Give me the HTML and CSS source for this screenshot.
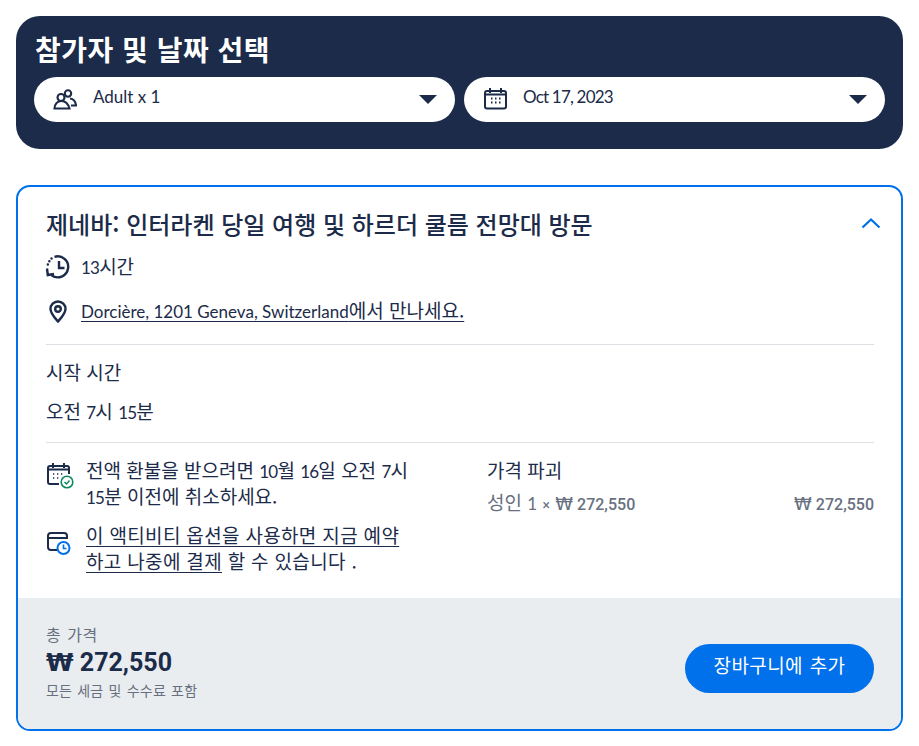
FILE: index.html
```html
<!DOCTYPE html>
<html lang="ko">
<head>
    <meta charset="UTF-8">
    <meta name="viewport" content="width=device-width, initial-scale=1.0">
    <title>참가자 및 날짜 선택</title>
    <link rel="stylesheet" href="styles.css">
</head>
<body>
    <div class="picker">
        <h2>참가자 및 날짜 선택</h2>
        <div class="picker-row">
            <div class="pill">
                <svg class="pill-icon" width="24" height="24" viewBox="0 0 24 24" fill="none" stroke="#1b2b49" stroke-width="2.100">
                    <circle cx="15" cy="5.500" r="3.200"/>
                    <path d="M17 10.500c3 .3 5.500 2.500 6 7h-5"/>
                    <circle cx="8" cy="9.500" r="3.500" fill="#fff"/>
                    <path d="M1.500 20.500c.3-4.500 3-7.500 7-7.500s6.700 3 8 7.500z" fill="#fff"/>
                </svg>
                <span class="num pill-text">Adult x 1</span>
                <span class="caret"></span>
            </div>
            <div class="pill">
                <svg class="pill-icon" width="24" height="24" viewBox="0 0 24 24" fill="none" stroke="#1b2b49" stroke-width="2">
                    <rect x="2" y="3" width="21" height="17.500" rx="2"/>
                    <path d="M7 0v5M18 0v5M2 6.500h21" />
                    <path d="M8 10.500h1.500M12 10.500h1.500M16 10.500h1.500M8 14.500h1.500M12 14.500h1.500M16 14.500h1.500" stroke-width="1.800"/>
                </svg>
                <span class="num tight pill-text">Oct 17, 2023</span>
                <span class="caret"></span>
            </div>
        </div>
    </div>

    <div class="card">
        <div class="card-body">
            <div class="card-head">
                <h3>제네바: 인터라켄 당일 여행 및 하르더 쿨름 전망대 방문</h3>
                <svg width="20" height="12" viewBox="0 0 20 12" fill="none" stroke="#0070eb" stroke-width="2.200">
                    <path d="M1.500 10.500 10 2.500l8.500 8"/>
                </svg>
            </div>
            <div class="meta duration">
                <svg width="26" height="26" viewBox="0 0 26 26" fill="none" stroke="#1b2b49" stroke-width="2.400">
                    <path d="M9.500 2.800a10.500 10.500 0 1 1-3 18.500"/>
                    <path d="M14 7v7h5.500"/>
                    <path d="M2 14.500l.8 6.500 6.200-1" />
                    <path d="M2.800 10.500h.1M4.300 7.200h.1M6.500 4.500h.1" stroke-linecap="round"/>
                </svg>
                <span><span class="num tight">13</span>시간</span>
            </div>
            <div class="meta place">
                <svg width="26" height="26" viewBox="0 0 26 26" fill="none" stroke="#1b2b49" stroke-width="2.400">
                    <path d="M13 24.500c-4-4.500-7.500-8-7.500-12.500a7.500 7.500 0 0 1 15 0c0 4.500-3.500 8-7.500 12.500z"/>
                    <circle cx="13" cy="12" r="2.800"/>
                </svg>
                <a href="#"><span class="num">Dorcière, 1201 Geneva, Switzerland</span>에서 만나세요.</a>
            </div>
            <div class="start">
                <div>시작 시간</div>
                <div class="start-time">오전 <span class="num tight">7</span>시 <span class="num tight">15</span>분</div>
            </div>
            <div class="details">
                <div class="policies">
                    <div class="policy">
                        <svg width="28" height="28" viewBox="0 0 28 28" fill="none" stroke="#1b2b49" stroke-width="2">
                            <path d="M13 22H4a2 2 0 0 1-2-2V6a2 2 0 0 1 2-2h17a2 2 0 0 1 2 2v6"/>
                            <path d="M7 1v5M18 1v5M2 7.500h21"/>
                            <path d="M7 12h1.300M11 12h1.300M15 12h1.300M7 16h1.300M11 16h1.300" stroke-width="1.600"/>
                            <circle cx="21" cy="20" r="5.800" fill="#fff" stroke="#0f8a5f" stroke-width="1.600"/>
                            <path d="M18.500 20l2 2 3-3.500" stroke="#0f8a5f" stroke-width="1.500"/>
                        </svg>
                        <p>전액 환불을 받으려면 <span class="num tight">10</span>월 <span class="num tight">16</span>일 오전 <span class="num tight">7</span>시 <span class="num tight">15</span>분 이전에 취소하세요.</p>
                    </div>
                    <div class="policy">
                        <svg width="28" height="28" viewBox="0 0 28 28" fill="none" stroke="#1b2b49" stroke-width="2">
                            <path d="M11 23H5a3 3 0 0 1-3-3V9a3 3 0 0 1 3-3h13a3 3 0 0 1 3 3v3"/>
                            <path d="M2 11h19"/>
                            <circle cx="17.500" cy="21" r="6" fill="#fff" stroke="#0070eb" stroke-width="2"/>
                            <path d="M17.500 17.500V21.500h3" stroke="#0070eb" stroke-width="1.600"/>
                        </svg>
                        <p class="spaced"><a href="#">이 액티비티 옵션을 사용하면 지금 예약<br>하고 나중에 결제</a> 할 수 있습니다 .</p>
                    </div>
                </div>
                <div class="breakdown">
                    <div class="breakdown-title">가격 파괴</div>
                    <div class="breakdown-row">
                        <span>성인 <span class="num">1</span> <span class="times">×</span> <span class="amount"><span class="won">₩</span> 272,550</span></span>
                        <span class="amount"><span class="won">₩</span> 272,550</span>
                    </div>
                </div>
            </div>
        </div>
        <div class="card-foot">
            <div>
                <div class="foot-label">총 가격</div>
                <div class="foot-price"><span class="won">₩</span> 272,550</div>
                <div class="foot-note">모든 세금 및 수수료 포함</div>
            </div>
            <button>장바구니에 추가</button>
        </div>
    </div>
</body>
</html>
```

FILE: styles.css
```css
body {
    margin: 0;
    padding: 16px;
    font-family: "Noto Sans CJK KR", sans-serif;
    font-size: 19px;
    color: #1b2b49;
    background: #fff;
}
h2, h3, p {
    margin: 0;
}
a {
    color: inherit;
    text-decoration: underline;
    text-underline-offset: 3px;
}
.num {
    font-family: Lato, sans-serif;
    font-size: 17px;
    line-height: 1;
}
.tight {
    letter-spacing: -0.8px;
}
.picker {
    height: 133px;
    box-sizing: border-box;
    padding: 14px 18px 0;
    background: #1b2b49;
    border-radius: 24px;
}
.picker h2 {
    color: #fff;
    font-size: 28px;
    line-height: 38px;
    font-weight: 700;
    letter-spacing: 0.5px;
    margin-bottom: 9px;
    padding-left: 1px;
}
.picker-row {
    display: flex;
    gap: 9px;
}
.pill {
    flex: 1;
    height: 45px;
    display: flex;
    align-items: center;
    padding: 0 18px 0 19px;
    background: #fff;
    border-radius: 23px;
}
.pill-icon {
    margin-right: 16px;
}
.pill-text {
    flex: 1;
    margin-top: -6px;
}
.caret {
    width: 0;
    height: 0;
    border-left: 9px solid transparent;
    border-right: 9px solid transparent;
    border-top: 9px solid #1b2b49;
}
.card {
    margin-top: 36px;
    border: 2px solid #0070eb;
    border-radius: 14px;
    overflow: hidden;
}
.card-body {
    height: 411px;
    box-sizing: border-box;
    padding: 18px 27px 0 28px;
}
.card-head {
    display: flex;
    justify-content: space-between;
    align-items: center;
    height: 36px;
}
.card-head h3 {
    font-size: 24px;
    font-weight: 500;
}
.card-head svg {
    margin-right: -7px;
}
.meta {
    display: flex;
    align-items: center;
    gap: 10px;
}
.meta svg {
    flex: none;
    margin-left: -1px;
}
.duration {
    margin-top: 13px;
}
.duration > span {
    margin-top: -4px;
}
.place {
    margin-top: 16px;
    padding-bottom: 21px;
    border-bottom: 1px solid #dde1e6;
}
.start {
    padding: 14px 0 18px;
    border-bottom: 1px solid #dde1e6;
    line-height: 26px;
}
.start-time {
    margin-top: 13px;
}
.details {
    display: flex;
    padding-top: 14px;
}
.policies {
    width: 441px;
    flex: none;
}
.policy {
    display: flex;
    gap: 12px;
    width: 366px;
    line-height: 26px;
    margin-bottom: 13px;
}
.policy svg {
    flex: none;
    margin-top: 5px;
}
.spaced {
    letter-spacing: 0.33px;
}
.breakdown {
    flex: 1;
}
.breakdown-title {
    line-height: 26px;
}
.breakdown-row {
    display: flex;
    justify-content: space-between;
    align-items: baseline;
    margin-top: 6px;
    color: #68707f;
    line-height: 26px;
}
.times {
    font-family: Roboto, sans-serif;
    font-size: 14px;
}
.amount {
    font-family: Roboto, sans-serif;
    font-size: 16px;
    font-weight: 500;
}
.amount .won {
    font-size: 18px;
}
.won {
    font-family: "DejaVu Sans", sans-serif;
}
.card-foot {
    height: 131px;
    box-sizing: border-box;
    padding: 0 27px 0 28px;
    background: #e9edf0;
    display: flex;
    justify-content: space-between;
    align-items: center;
}
.foot-label {
    font-size: 16px;
    line-height: 20px;
    letter-spacing: 0.5px;
    word-spacing: 1px;
    color: #68707f;
    margin: -5px 0 1px;
}
.foot-price {
    font-family: Roboto, sans-serif;
    font-size: 25px;
    font-weight: 700;
    line-height: 36px;
}
.foot-note {
    font-size: 14px;
    line-height: 18px;
    letter-spacing: 0.2px;
    word-spacing: 1px;
    color: #68707f;
}
button {
    width: 189px;
    height: 49px;
    margin-top: 9px;
    padding: 0 0 7px;
    border: none;
    border-radius: 25px;
    background: #0070eb;
    color: #fff;
    font-family: inherit;
    font-size: 19px;
    letter-spacing: 0.4px;
    word-spacing: 1px;
    cursor: pointer;
}
```
